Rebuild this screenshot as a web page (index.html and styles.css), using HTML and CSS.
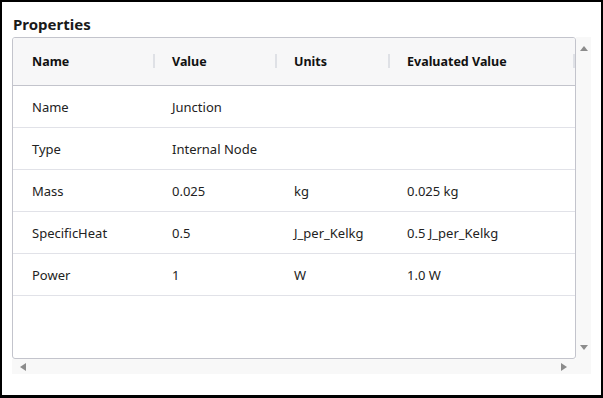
FILE: index.html
```html
<!DOCTYPE html>
<html lang="en">
<head>
  <meta charset="UTF-8" />
  <title>Properties</title>
  <link rel="stylesheet" href="styles.css">
</head>
<body>
  <div class="frame">
    <h1 class="title">Properties</h1>

    <div class="grid-wrap">
      <div class="table-box">
        <table class="props">
          <colgroup>
            <col class="c-name">
            <col class="c-value">
            <col class="c-units">
            <col>
          </colgroup>
          <thead>
            <tr>
              <th>Name</th>
              <th>Value</th>
              <th>Units</th>
              <th>Evaluated Value</th>
            </tr>
          </thead>
          <tbody>
            <tr><td>Name</td><td>Junction</td><td></td><td></td></tr>
            <tr><td>Type</td><td>Internal Node</td><td></td><td></td></tr>
            <tr><td>Mass</td><td>0.025</td><td>kg</td><td>0.025 kg</td></tr>
            <tr><td>SpecificHeat</td><td>0.5</td><td>J_per_Kelkg</td><td>0.5 J_per_Kelkg</td></tr>
            <tr><td>Power</td><td>1</td><td>W</td><td>1.0 W</td></tr>
          </tbody>
        </table>
      </div>

      <!-- Scrollbars -->
      <div class="vscroll">
        <span class="arrow up"></span>
        <span class="arrow down"></span>
      </div>
      <div class="hscroll">
        <span class="arrow left"></span>
        <span class="arrow right"></span>
      </div>
      <div class="corner"></div>
    </div>
  </div>
</body>
</html>
```

FILE: styles.css
```css
* {
  box-sizing: border-box;
}
html, body {
  margin: 0;
  padding: 0;
}
body {
  font-family: 'Noto Sans', 'Open Sans', sans-serif;
  background-color: white;
  color: #222;
}
.frame {
  width: 603px;
  height: 398px;
  border: 2px solid black;
  border-bottom-width: 3px;
  padding: 12px 0 0 10px;
}
.title {
  margin: 0 0 3px 1px;
  font-size: 15px;
  line-height: 20px;
  font-weight: bold;
  color: #1a1a1a;
}
.grid-wrap {
  display: grid;
  grid-template-columns: 564px 15px;
  grid-template-rows: 322px 15px;
}
.table-box {
  border: 1px solid #c3c4cc;
  border-radius: 3px;
  overflow: hidden;
  background-color: white;
}
.props {
  width: 100%;
  border-collapse: collapse;
  table-layout: fixed;
  font-size: 13px;
}
.c-name { width: 142px; }
.c-value { width: 122px; }
.c-units { width: 113px; }
.props th {
  position: relative;
  height: 47px;
  padding: 1px 0 0 17px;
  text-align: left;
  font-weight: bold;
  font-size: 12.5px;
  color: #111;
  background-color: #f7f7f8;
  border-bottom: 1px solid #c3c4cc;
}
.props th:first-child,
.props td:first-child {
  padding-left: 19px;
}
.props th::after {
  content: '';
  position: absolute;
  right: 0;
  top: 16px;
  width: 2px;
  height: 14px;
  background-color: #dfe1e6;
}
.props td {
  height: 42px;
  padding: 2px 0 0 17px;
  border-bottom: 1px solid #e1e2e8;
  white-space: nowrap;
}
.vscroll,
.hscroll,
.corner {
  background-color: #f8f8f8;
}
.vscroll {
  display: flex;
  flex-direction: column;
  justify-content: space-between;
  align-items: center;
  padding: 9px 0 9px 1px;
}
.hscroll {
  display: flex;
  justify-content: space-between;
  align-items: center;
  padding: 0 9px 0 8px;
}
.arrow {
  width: 0;
  height: 0;
  border: 4px solid transparent;
}
.arrow.up {
  border-width: 0 4.5px 5px;
  border-bottom-color: #8c8c8c;
}
.arrow.down {
  border-width: 5px 4.5px 0;
  border-top-color: #8c8c8c;
}
.arrow.left {
  border-width: 4.5px 6px 4.5px 0;
  border-right-color: #8c8c8c;
}
.arrow.right {
  border-width: 4.5px 0 4.5px 6px;
  border-left-color: #8c8c8c;
}
```
